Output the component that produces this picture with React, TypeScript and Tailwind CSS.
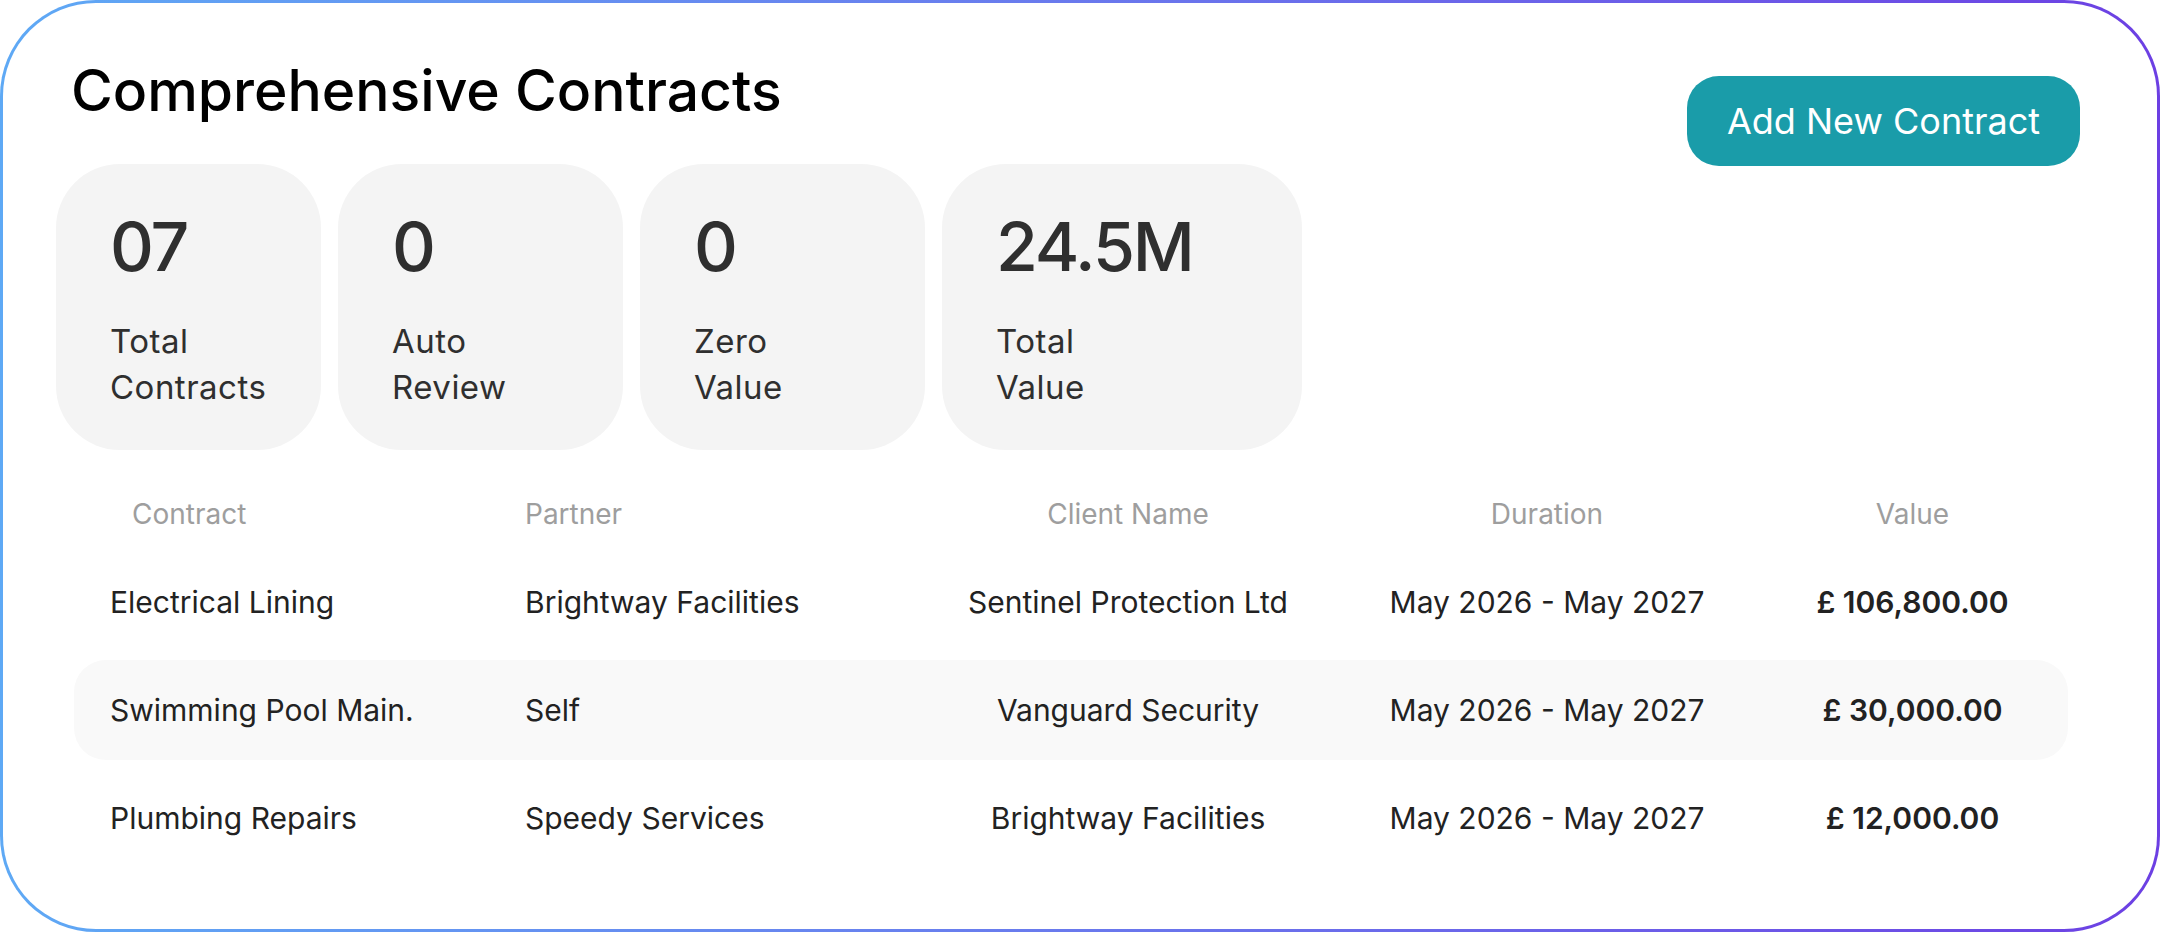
import { FC } from 'react'

type Stat = { value: string; label: [string, string]; width: string }

const stats: Stat[] = [
  { value: '07', label: ['Total', 'Contracts'], width: 'w-[265px]' },
  { value: '0', label: ['Auto', 'Review'], width: 'w-[285px]' },
  { value: '0', label: ['Zero', 'Value'], width: 'w-[285px]' },
  { value: '24.5M', label: ['Total', 'Value'], width: 'w-[360px]' },
]

type Contract = {
  name: string
  partner: string
  client: string
  duration: string
  value: string
}

const contracts: Contract[] = [
  {
    name: 'Electrical Lining',
    partner: 'Brightway Facilities',
    client: 'Sentinel Protection Ltd',
    duration: 'May 2026 - May 2027',
    value: '£ 106,800.00',
  },
  {
    name: 'Swimming Pool Main.',
    partner: 'Self',
    client: 'Vanguard Security',
    duration: 'May 2026 - May 2027',
    value: '£ 30,000.00',
  },
  {
    name: 'Plumbing Repairs',
    partner: 'Speedy Services',
    client: 'Brightway Facilities',
    duration: 'May 2026 - May 2027',
    value: '£ 12,000.00',
  },
]

const cols = 'grid grid-cols-[415px_430px_346px_492px_239px] items-center px-[36px]'

const StatCard: FC<{ stat: Stat }> = ({ stat }) => (
  <div className={`${stat.width} h-[286px] rounded-[64px] bg-[#f4f4f4] pl-[54px] pt-[48px] text-[#2f2f2f]`}>
    <div className="text-[68px] leading-none font-medium tracking-[-0.03em]">{stat.value}</div>
    <div className="mt-[38px] text-[33px] leading-[46px] tracking-[0.015em]">
      <div>{stat.label[0]}</div>
      <div>{stat.label[1]}</div>
    </div>
  </div>
)

const App: FC = () => {
  return (
    <div
      className="w-[2160px] h-[932px] rounded-[96px] p-[3px] bg-gradient-to-r from-[#5ea9f5] to-[#6c3fe3]"
      style={{ fontFamily: 'Inter, "Noto Sans", sans-serif' }}
    >
      <div className="h-full rounded-[93px] bg-white pl-[53px] pr-[77px] pt-[59px]">
        {/* Header: title + stats on the left, action on the right */}
        <div className="flex items-start justify-between">
          <div>
            <h1 className="ml-[15px] text-[57px] leading-[58px] font-medium text-black">
              Comprehensive Contracts
            </h1>
            <div className="mt-[44px] flex gap-[17px]">
              {stats.map((s) => (
                <StatCard key={s.label.join(' ')} stat={s} />
              ))}
            </div>
          </div>
          <button className="mt-[14px] h-[90px] w-[393px] rounded-[32px] bg-[#1a9ca9] text-[36px] text-white">
            Add New Contract
          </button>
        </div>

        {/* Contracts table */}
        <div className="ml-[18px] mr-[12px] mt-[50px]">
          <div className={`${cols} text-[28px] leading-none text-[#9e9e9e]`}>
            <div className="pl-[22px]">Contract</div>
            <div>Partner</div>
            <div className="text-center">Client Name</div>
            <div className="text-center">Duration</div>
            <div className="text-center">Value</div>
          </div>
          <div className="mt-[24px] flex flex-col gap-[8px]">
            {contracts.map((c, i) => (
              <div
                key={c.name}
                className={`${cols} h-[100px] rounded-[32px] text-[30px] text-[#222] ${
                  i % 2 === 1 ? 'bg-[#f9f9f9]' : ''
                }`}
              >
                <div>{c.name}</div>
                <div>{c.partner}</div>
                <div className="text-center">{c.client}</div>
                <div className="text-center">{c.duration}</div>
                <div className="text-center font-semibold">{c.value}</div>
              </div>
            ))}
          </div>
        </div>
      </div>
    </div>
  )
}

export default App
